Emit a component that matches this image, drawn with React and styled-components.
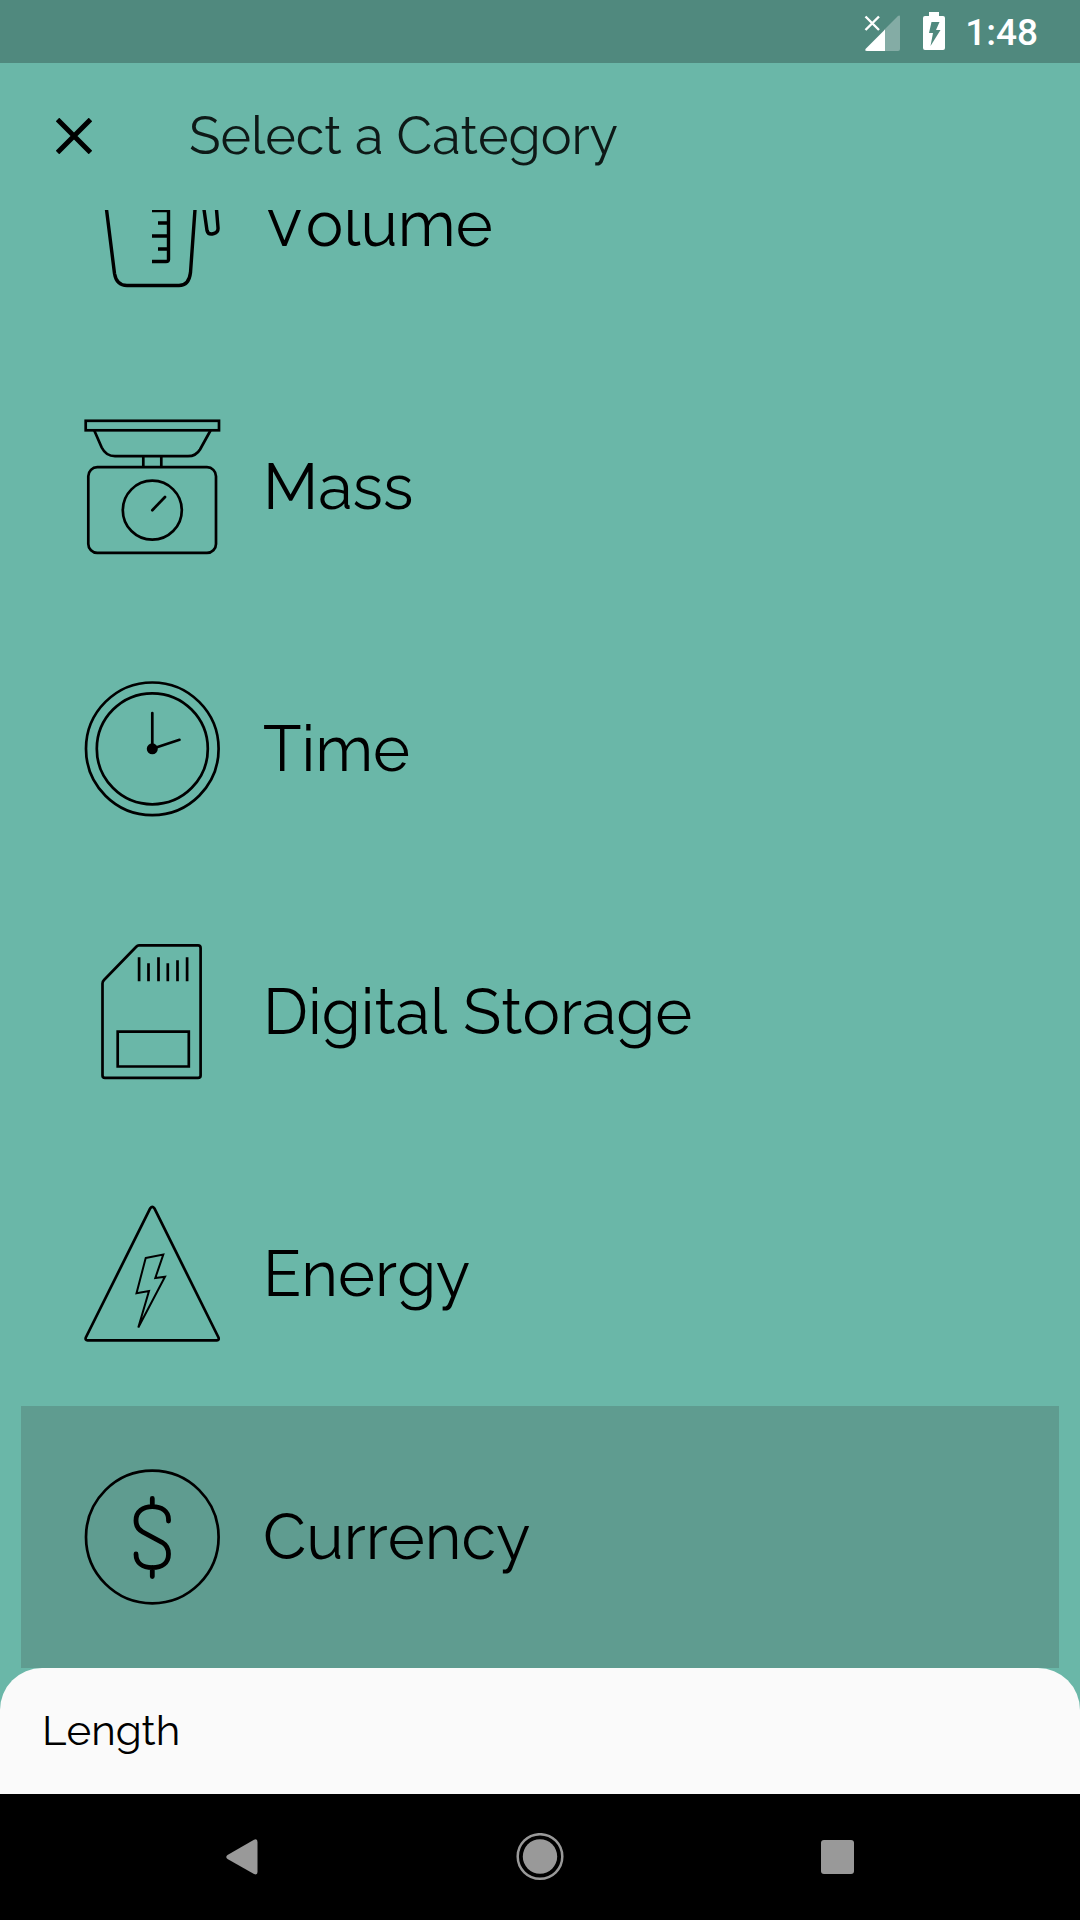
import React, { useState } from "react";
import styled, { createGlobalStyle } from "styled-components";

const GlobalStyle = createGlobalStyle`
  body {
    margin: 0;
    background: #6ab7a8;
  }
  * {
    box-sizing: border-box;
  }
`;

const Screen = styled.div`
  display: flex;
  flex-direction: column;
  height: 100vh;
  overflow: hidden;
  background: #6ab7a8;
  color: #000;
  font-family: Raleway, Lato, "Open Sans", sans-serif;
  font-weight: 400;
  font-kerning: none;
`;

const StatusBar = styled.header`
  display: flex;
  flex: none;
  align-items: center;
  justify-content: flex-end;
  height: 63px;
  padding-right: 42px;
  background: #50897e;
  color: #fff;
`;

const SignalIcon = styled.svg`
  width: 36px;
  height: 40px;
  margin-right: 23px;
`;

const BatteryIcon = styled.svg`
  width: 22px;
  height: 40px;
  margin-right: 20px;
`;

const Clock = styled.time`
  padding-top: 2px;
  font: 500 37px/44px Roboto, sans-serif;
`;

const AppBar = styled.div`
  display: flex;
  flex: none;
  align-items: center;
  gap: 42px;
  height: 147px;
  padding-bottom: 2px;
`;

const IconButton = styled.button`
  display: flex;
  align-items: center;
  justify-content: center;
  width: 147px;
  height: 100%;
  padding: 0;
  border: 0;
  background: none;
  color: inherit;
  cursor: pointer;
`;

const Title = styled.h1`
  margin: 0;
  color: #0e1917;
  font-size: 52px;
  font-weight: inherit;
  line-height: 64px;
`;

const ListViewport = styled.main`
  display: flex;
  flex: 1;
  flex-direction: column;
  justify-content: flex-end;
  min-height: 0;
  overflow: hidden;
  padding: 0 21px;
`;

const CategoryList = styled.ul`
  display: grid;
  flex: none;
  grid-template-rows: repeat(6, 1fr);
  height: 1575px;
  margin: 0;
  padding: 0;
  list-style: none;
`;

const CategoryButton = styled.button`
  display: flex;
  align-items: center;
  gap: 43px;
  width: 100%;
  height: 100%;
  padding: 0 63px;
  border: 0;
  background: ${(p) => (p.$selected ? "#5f9c90" : "transparent")};
  color: inherit;
  font: inherit;
  font-kerning: none;
  font-size: 63px;
  line-height: 76px;
  text-align: left;
  cursor: pointer;
`;

const CategoryIcon = styled.svg`
  flex: none;
  width: 136px;
  height: 136px;
  overflow: visible;
  fill: none;
  stroke: #000;
  stroke-width: ${(p) => p.$weight || 2.7};
  stroke-linejoin: round;
`;

const Sheet = styled.section`
  display: flex;
  flex: none;
  align-items: center;
  height: 126px;
  padding: 0 42px;
  border-radius: 42px 42px 0 0;
  background: #fafafa;
`;

const SheetTitle = styled.h2`
  margin: 0;
  font-size: 42px;
  font-weight: inherit;
  line-height: 50px;
`;

const NavBar = styled.nav`
  display: flex;
  flex: none;
  justify-content: center;
  height: 126px;
  padding-right: 1px;
  background: #000;
`;

const NavButton = styled.button`
  display: flex;
  align-items: center;
  justify-content: center;
  width: 298px;
  padding: 0;
  border: 0;
  background: none;
  cursor: pointer;
`;

const categories = [
  {
    name: "Volume",
    weight: 3.4,
    art: (
      <>
        <path d="M17 8 22.5 53 30.5 117Q32.500 129 43 129H95Q105 129 106.500 116L111 53 114 8" />
        <path d="M68 54H84.500V103Q84.500 105 82 105H68M74 66.500H84M68 79.500H84M74 92.500H84" />
        <path d="M116 20 120 53 123 74Q124 78 128 77.500L130 77Q134.500 76 134 71L132.500 53 130 20" />
      </>
    ),
  },
  {
    name: "Mass",
    art: (
      <>
        <rect x="1.7" y="1.300" width="133.300" height="9.500" strokeLinejoin="miter" />
        <path d="M10.300 11 17.700 28Q22 36.700 31 36.700H104Q112 36.700 116 30L126.500 11M59.300 37V48M77.300 37V48" />
        <rect x="4.300" y="47.700" width="127.700" height="85.700" rx="9" />
        <circle cx="68.300" cy="90.700" r="29.500" />
        <path d="M68.300 90.700 81 77.500" strokeLinecap="round" />
      </>
    ),
  },
  {
    name: "Time",
    art: (
      <>
        <circle cx="68.300" cy="67.300" r="66.300" />
        <circle cx="68.300" cy="67.300" r="55.500" />
        <path d="M68.300 31.500V67.300L95.500 58.300" strokeLinecap="round" />
        <circle cx="68.300" cy="67.300" r="5.500" fill="#000" stroke="none" />
      </>
    ),
  },
  {
    name: "Digital Storage",
    art: (
      <>
        <path d="M55 .8H114Q116.600 .8 116.600 3.500V131Q116.600 133.400 114 133.400H21Q18.500 133.400 18.500 131V39Q18.500 37 20 35.500L52 2.500Q53.500 .8 55 .8Z" />
        <path d="M55.100 12.800V36.700M64.500 18.800V36.700M74.500 12.800V36.700M83.800 18.800V36.700M93.500 15.800V36.700M103.100 12.800V36.700" />
        <path d="M33.700 87.100H104.800V122H33.700Z" strokeLinejoin="miter" />
      </>
    ),
  },
  {
    name: "Energy",
    art: (
      <>
        <path d="M66.300 1.700Q68.300-1 70.300 1.700L134.500 131Q135.300 133.900 133 133.900H3.500Q1 133.900 1.800 131Z" />
        <path
          d="M61.700 51.500 79.300 48 71.300 71.500 81 70.300 54.300 121 65 84.600 52.500 86.800Z"
          strokeWidth="2"
          strokeLinejoin="miter"
        />
      </>
    ),
  },
  {
    name: "Currency",
    art: (
      <>
        <circle cx="68.300" cy="67.500" r="66.300" />
        <path
          d="M84.500 51.500V50C84.500 41.500 77.500 37.200 68.300 37.200S52 42 52 51C52 57 54 60 58.500 62.300L78 72.800C82.500 75.500 84.500 78.500 84.500 84.500C84.500 93.500 78 98.200 68.300 98.200S52 93.500 52 84.500M68.300 29V37M68.300 98V107"
          strokeWidth="4.800"
          strokeLinecap="round"
        />
      </>
    ),
  },
];

export default function App() {
  const [selected, setSelected] = useState("Currency");

  return (
    <Screen>
      <GlobalStyle />
      <StatusBar>
        <SignalIcon viewBox="0 0 36 40" role="img" aria-label="No signal">
          <path d="M20 18 33.500 4.500Q36 2.500 36 5V37Q36 39 34 39H20Z" fill="#fff" opacity=".3" />
          <path d="M21 17.500V39H3Q0 39 2 36.500Z" fill="#fff" />
          <path d="M1.500 4.500 15 18M15 4.500 1.500 18" stroke="#fff" strokeWidth="2.400" fill="none" />
        </SignalIcon>
        <BatteryIcon viewBox="0 0 22 40" role="img" aria-label="Battery charging">
          <path
            fillRule="evenodd"
            fill="#fff"
            d="M6 0H16V4H20Q22 4 22 6V36Q22 38 20 38H2Q0 38 0 36V6Q0 4 2 4H6ZM8.500 10 6 21H10L7.500 34 17.500 18H13L16.500 10Z"
          />
        </BatteryIcon>
        <Clock>1:48</Clock>
      </StatusBar>

      <AppBar>
        <IconButton type="button" aria-label="Close">
          <svg width="36" height="36" viewBox="0 0 36 36" stroke="#000" strokeWidth="5">
            <path d="M1.500 1.500 34.500 34.500M34.500 1.500 1.500 34.500" />
          </svg>
        </IconButton>
        <Title>Select a Category</Title>
      </AppBar>

      <ListViewport>
        <CategoryList>
          {categories.map(({ name, weight, art }) => (
            <li key={name}>
              <CategoryButton
                type="button"
                $selected={name === selected}
                aria-pressed={name === selected}
                onClick={() => setSelected(name)}
              >
                <CategoryIcon viewBox="0 -0.5 136 136" $weight={weight} aria-hidden="true">
                  {art}
                </CategoryIcon>
                {name}
              </CategoryButton>
            </li>
          ))}
        </CategoryList>
      </ListViewport>

      <Sheet>
        <SheetTitle>Length</SheetTitle>
      </Sheet>

      <NavBar>
        <NavButton type="button" aria-label="Back">
          <svg width="32" height="36" viewBox="0 0 32 36" fill="#999">
            <path d="M1.500 16 28 .8Q31.500-.8 31.500 3V33Q31.500 36.500 28 35L1.500 20Q-1 18 1.500 16Z" />
          </svg>
        </NavButton>
        <NavButton type="button" aria-label="Home">
          <svg width="48" height="48" viewBox="0 0 48 48" fill="#999">
            <circle cx="24" cy="23.500" r="22.300" fill="none" stroke="#999" strokeWidth="2.500" />
            <circle cx="24" cy="23.500" r="17.200" />
          </svg>
        </NavButton>
        <NavButton type="button" aria-label="Recent apps">
          <svg width="34" height="34" viewBox="0 0 34 34" fill="#999">
            <rect width="33" height="34" rx="3" />
          </svg>
        </NavButton>
      </NavBar>
    </Screen>
  );
}
